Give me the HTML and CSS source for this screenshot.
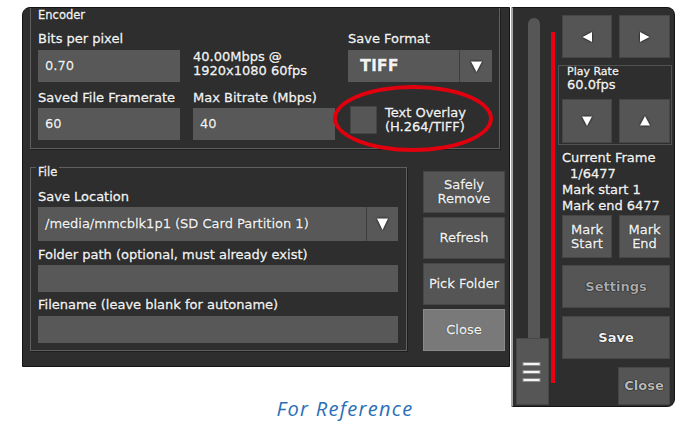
FILE: index.html
```html
<!DOCTYPE html>
<html>
<head>
<meta charset="utf-8">
<link rel="stylesheet" href="styles.css">
</head>
<body>
<div class="page">
  <div class="left-col">
    <div class="main-panel">
      <div class="encoder">
        <div class="group-title">Encoder</div>
        <div class="enc-grid">
          <div class="lbl">Bits per pixel</div>
          <div class="lbl"></div>
          <div class="lbl">Save Format</div>
          <div class="field">0.70</div>
          <div class="rate"><div>40.00Mbps @</div><div>1920x1080 60fps</div></div>
          <div class="combo">
            <span class="combo-text big">TIFF</span>
            <span class="combo-btn"><svg width="11" height="11" viewBox="0 0 11 11"><polygon points="0,0.5 11,0.5 5.5,11" fill="#fff"/></svg></span>
          </div>
          <div class="lbl r2">Saved File Framerate</div>
          <div class="lbl r2">Max Bitrate (Mbps)</div>
          <div class="lbl r2"></div>
          <div class="field">60</div>
          <div class="field">40</div>
          <div class="check-cell">
            <span class="checkbox"></span>
            <span class="check-text"><span class="ln">Text Overlay</span><span class="ln">(H.264/TIFF)</span></span>
          </div>
        </div>
        <div class="highlight"></div>
      </div>
      <div class="lower">
        <div class="file-group">
          <div class="group-title file-title">File</div>
          <div class="lbl fl1">Save Location</div>
          <div class="combo combo-wide">
            <span class="combo-text">/media/mmcblk1p1 (SD Card Partition 1)</span>
            <span class="combo-btn"><svg width="11" height="12" viewBox="0 0 11 12"><polygon points="0,0.5 11,0.5 5.5,12" fill="#fff"/></svg></span>
          </div>
          <div class="lbl fl2">Folder path (optional, must already exist)</div>
          <div class="field thin"></div>
          <div class="lbl fl3">Filename (leave blank for autoname)</div>
          <div class="field thin"></div>
        </div>
        <div class="side-buttons">
          <div class="btn two">Safely<br>Remove</div>
          <div class="btn">Refresh</div>
          <div class="btn">Pick Folder</div>
          <div class="btn active">Close</div>
        </div>
      </div>
    </div>
    <div class="caption">For Reference</div>
  </div>

  <div class="right-panel">
    <div class="slider">
      <div class="track"></div>
      <div class="handle">
        <svg width="19" height="22" viewBox="0 0 19 22">
          <rect x="1" y="1.5" width="17" height="3" fill="#f4f4f4" stroke="#8a8a8a" stroke-width="1"/>
          <rect x="1" y="9.5" width="17" height="3" fill="#f4f4f4" stroke="#8a8a8a" stroke-width="1"/>
          <rect x="1" y="17.5" width="17" height="3" fill="#f4f4f4" stroke="#8a8a8a" stroke-width="1"/>
        </svg>
      </div>
    </div>
    <div class="marker-col"><div class="marker"></div></div>
    <div class="controls">
      <div class="pair arrows">
        <div class="btn"><svg width="10" height="10" viewBox="0 0 10 10"><polygon points="10,0 10,10 0.5,5" fill="#fff"/></svg></div>
        <div class="btn"><svg width="10" height="10" viewBox="0 0 10 10"><polygon points="0,0 0,10 9.5,5" fill="#fff"/></svg></div>
      </div>
      <div class="rate-box">
        <div class="rate-title">Play Rate</div>
        <div class="rate-value">60.0fps</div>
        <div class="pair rate-btns">
          <div class="btn"><svg width="10" height="10" viewBox="0 0 10 10"><polygon points="0,0.5 10,0.5 5,10" fill="#fff"/></svg></div>
          <div class="btn"><svg width="10" height="10" viewBox="0 0 10 10"><polygon points="0,9.5 10,9.5 5,0" fill="#fff"/></svg></div>
        </div>
      </div>
      <div class="info">
        <div>Current Frame</div>
        <div class="indent">1/6477</div>
        <div>Mark start 1</div>
        <div>Mark end 6477</div>
      </div>
      <div class="pair marks">
        <div class="btn two">Mark<br>Start</div>
        <div class="btn two">Mark<br>End</div>
      </div>
      <div class="btn wide bold disabled settings">Settings</div>
      <div class="btn wide bold save">Save</div>
      <div class="close-row"><div class="btn bold dim close-r">Close</div></div>
    </div>
  </div>
</div>
</body>
</html>
```

FILE: styles.css
```css
* { box-sizing: border-box; }

body {
  margin: 0;
  background: #ffffff;
  font-family: "DejaVu Sans", "Liberation Sans", sans-serif;
  font-size: 13px;
  color: #f2f2f2;
}

.page {
  display: flex;
  align-items: flex-start;
  gap: 1px;
  padding: 7px 0 0 22px;
}

.left-col { width: 488px; }

.main-panel,
.right-panel {
  background: #2e2e2e;
  text-shadow: 0 0 1px #000, 0 0 1px #000;
  -webkit-text-stroke: 0.35px currentColor;
}

.main-panel {
  width: 488px;
  height: 360px;
  border: 1px solid #141414;
  border-radius: 8px 0 0 0;
}

/* ---------- Encoder ---------- */
.encoder {
  position: relative;
  margin-left: 7px;
  width: 470px;
  border: 1px solid #5f5f5f;
  border-top: 0;
  box-shadow: 1px 1px 0 #1e1e1e;
  padding: 0 0 8px 7px;
}

.group-title {
  font-size: 11.5px;
  line-height: 14px;
}

.enc-grid {
  margin-top: 9px;
  display: grid;
  grid-template-columns: 142px 142px 144px;
  column-gap: 13px;
}

.lbl {
  height: 16px;
  line-height: 16px;
  margin-bottom: 3px;
  white-space: nowrap;
}

.lbl.r2 {
  margin-top: 8px;
  margin-bottom: 2px;
}

.field {
  height: 32px;
  line-height: 32px;
  padding-left: 7px;
  background: #585858;
}

.field.thin {
  height: 27px;
  width: 360px;
}

.rate {
  line-height: 14px;
  white-space: nowrap;
}

.combo {
  display: flex;
  height: 32px;
  background: #585858;
}

.combo-text {
  flex: 1;
  padding-left: 12px;
  line-height: 32px;
  white-space: nowrap;
}

.combo-text.big {
  font-size: 16px;
  font-weight: bold;
}

.combo-btn {
  width: 33px;
  border-left: 1px solid #3e3e3e;
  display: flex;
  align-items: center;
  justify-content: center;
}

.combo-btn svg { filter: drop-shadow(0 0 1px #000); }

.check-cell {
  display: flex;
  align-items: flex-start;
  margin-top: -2px;
}

.checkbox {
  width: 27px;
  height: 28px;
  margin-left: 2px;
  background: #565656;
  border: 1px solid #444;
}

.check-text {
  margin-left: 8px;
  display: flex;
  flex-direction: column;
  line-height: 14px;
  white-space: nowrap;
}

.highlight {
  position: absolute;
  left: 302px;
  top: 77px;
  width: 160px;
  height: 67px;
  border: 4px solid #e3000e;
  border-radius: 50%;
}

/* ---------- File ---------- */
.lower {
  display: flex;
  align-items: flex-start;
  margin: 18px 0 0 7px;
}

.file-group {
  width: 377px;
  border: 1px solid #5f5f5f;
  box-shadow: 1px 1px 0 #1e1e1e;
  padding: 0 0 7px 7px;
}

.file-title {
  width: fit-content;
  margin: -3px 0 0 -2px;
  padding: 0 2px;
  background: #2e2e2e;
}

.lbl.fl1 { margin-top: 10px; margin-bottom: 2px; }
.lbl.fl2 { margin-top: 6px; margin-bottom: 2px; }
.lbl.fl3 { margin-top: 5px; margin-bottom: 3px; }

.combo-wide {
  width: 360px;
  height: 34px;
}

.combo-wide .combo-text {
  padding-left: 7px;
  line-height: 34px;
}

.combo-wide .combo-btn { width: 32px; }

.side-buttons {
  margin: 4px 0 0 16px;
  width: 82px;
  display: flex;
  flex-direction: column;
  gap: 4px;
}

.side-buttons .btn { height: 42px; }

.btn {
  display: flex;
  align-items: center;
  justify-content: center;
  text-align: center;
  background: #555555;
  border: 1px solid #464646;
  line-height: 14px;
}

.btn svg { filter: drop-shadow(0 0 1px #000); }

.btn.active {
  background: #797979;
  border-color: #8a8a8a;
}

.btn.bold { font-weight: bold; -webkit-text-stroke: 0; }
.btn.disabled { color: #a9a9a9; }
.btn.dim { color: #b9b9b9; }

/* ---------- Caption ---------- */
.caption {
  margin-top: 30px;
  padding-left: 158px;
  text-align: center;
  font-family: "Open Sans", "DejaVu Sans", sans-serif;
  font-style: italic;
  font-size: 20px;
  letter-spacing: 1.3px;
  line-height: 24px;
  color: #2a6fb6;
}

/* ---------- Right panel ---------- */
.right-panel {
  width: 164px;
  height: 400px;
  border: 1px solid #141414;
  border-left: 2px solid #a6a6a6;
  border-radius: 0 8px 8px 0;
  display: flex;
}

.slider {
  margin-left: 3px;
  width: 33px;
  display: flex;
  flex-direction: column;
}

.track {
  flex: 1;
  width: 12px;
  margin: 10px 0 0 12px;
  background: #565656;
  border-radius: 6px 6px 0 0;
}

.handle {
  height: 67px;
  margin-bottom: 1px;
  background: #565656;
  border: 1px solid #474747;
  display: flex;
  align-items: center;
  justify-content: center;
  padding-right: 2px;
}

.marker-col { width: 13px; }

.marker {
  width: 4px;
  height: 351px;
  margin: 24px 0 0 2px;
  background: #ec0010;
  box-shadow: 2px 0 0 #173d42;
}

.controls {
  width: 108px;
  padding-top: 7px;
  display: flex;
  flex-direction: column;
}

.pair {
  display: grid;
  grid-template-columns: 50px 51px;
  column-gap: 7px;
}

.arrows { height: 43px; }

.rate-box {
  margin: 7px -2px 0 -4px;
  border: 1px solid #525252;
  padding: 0 1px 1px 3px;
}

.rate-title {
  font-size: 11px;
  line-height: 12px;
  padding-left: 5px;
}

.rate-value {
  line-height: 14px;
  padding-left: 5px;
}

.rate-btns {
  margin-top: 7px;
  height: 44px;
}

.info {
  margin-top: 5px;
  line-height: 16px;
  white-space: nowrap;
}

.info .indent { padding-left: 8px; }

.marks {
  margin-top: 1px;
  height: 43px;
}

.btn.wide { height: 43px; }
.settings { margin-top: 7px; }
.save { margin-top: 8px; }

.close-row {
  margin-top: 8px;
  display: flex;
  justify-content: flex-end;
}

.close-r {
  width: 52px;
  height: 38px;
}
```
